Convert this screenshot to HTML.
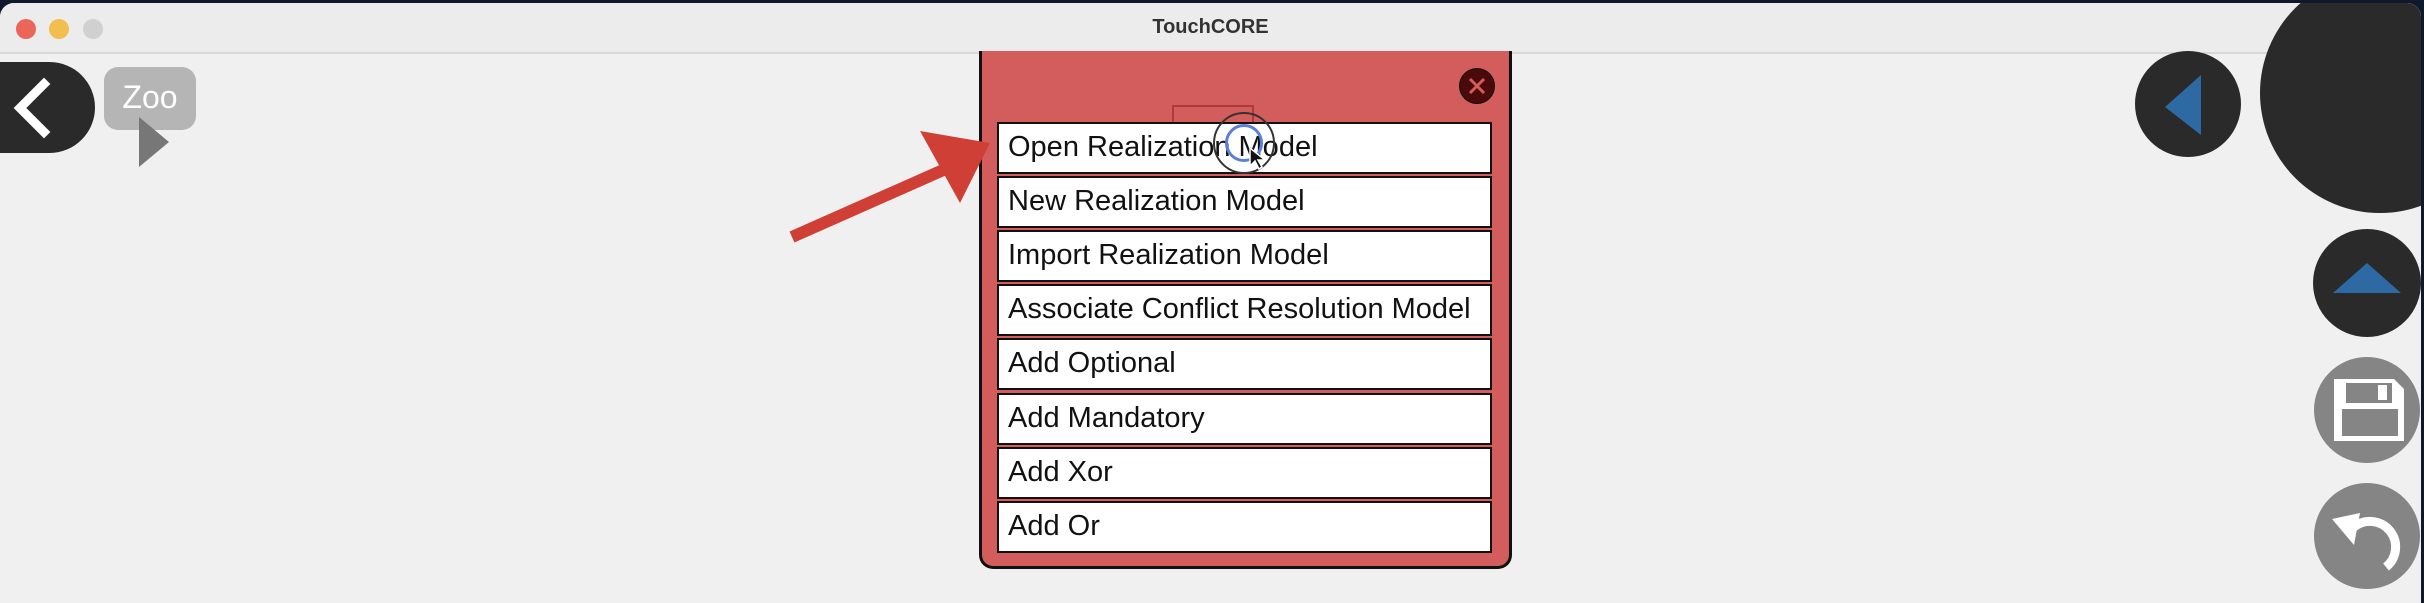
<!DOCTYPE html>
<html><head><meta charset="utf-8"><style>
body{margin:0;width:2424px;height:600px;overflow:hidden;background:#0e1a2c;font-family:"Liberation Sans",sans-serif;position:relative}
.win{position:absolute;left:0;top:3px;width:2421px;height:600px;background:#f0f0f0;border-radius:14px 14px 0 0;overflow:hidden}
.title{position:absolute;left:0;top:0;width:100%;height:49px;background:#ececec;border-bottom:2px solid #d8d8d8;text-align:center;line-height:48px;font-size:20px;font-weight:bold;color:#333}
.dot{position:absolute;top:16px;width:20px;height:20px;border-radius:50%}
.a{position:absolute}
.pop{position:absolute;left:979px;top:48px;width:527px;height:515px;background:#d35d5d;border:3px solid #111;border-top:none;border-radius:0 0 14px 14px}
.item{position:absolute;left:997px;width:482px;height:48px;background:#fff;border:2px solid #111;font-size:29px;line-height:46px;padding-left:9px;box-sizing:content-box;color:#111;white-space:nowrap}
</style></head><body>
<div class="win">
<div class="title">TouchCORE</div>
<div class="dot" style="left:16px;background:#ec6559"></div>
<div class="dot" style="left:49px;background:#f2be4f"></div>
<div class="dot" style="left:83px;background:#d0d0d0"></div>
<div class="a" style="left:-50px;top:59px;width:145px;height:91px;background:#2a2a2a;border-radius:46px"></div>
<svg class="a" style="left:0;top:59px" width="96" height="92"><polyline points="44,22 20,46 44,70" fill="none" stroke="#fff" stroke-width="9" stroke-linecap="square"/></svg>
<div class="a" style="left:104px;top:64px;width:92px;height:63px;background:#b5b5b5;border-radius:14px;color:#fff;font-size:32px;text-align:center;line-height:60px">Zoo</div>
<svg class="a" style="left:139px;top:114px" width="32" height="52"><polygon points="0,0 30,25 0,50" fill="#777"/></svg>
<div class="pop"></div>
<div class="a" style="left:1172px;top:102px;width:78px;height:25px;border:2px solid #b03a3a;border-bottom:none"></div>
<div class="a" style="left:1459px;top:65px;width:34px;height:34px;border-radius:50%;background:#4a0a0a;border:1px solid #111"></div>
<svg class="a" style="left:1459px;top:65px" width="36" height="36"><path d="M11 11L25 25M25 11L11 25" stroke="#d35d5d" stroke-width="3"/></svg>
<div class="item" style="top:119px">Open Realization Model</div>
<div class="item" style="top:173px">New Realization Model</div>
<div class="item" style="top:227px">Import Realization Model</div>
<div class="item" style="top:281px">Associate Conflict Resolution Model</div>
<div class="item" style="top:335px">Add Optional</div>
<div class="item" style="top:390px">Add Mandatory</div>
<div class="item" style="top:444px">Add Xor</div>
<div class="item" style="top:498px">Add Or</div>
<div class="a" style="left:1213px;top:109px;width:62px;height:62px;border-radius:50%;border:2px solid #333;box-sizing:border-box"></div>
<div class="a" style="left:1225px;top:121px;width:38px;height:38px;border-radius:50%;border:3px solid #5a7fd8;box-sizing:border-box"></div>
<svg class="a" style="left:1248px;top:143px" width="20" height="26"><path d="M2 2L2 20L7 15L11 23L14 21L10 14L17 14Z" fill="#111" stroke="#fff" stroke-width="1.5"/></svg>
<svg class="a" style="left:780px;top:120px" width="230" height="130"><line x1="12" y1="114" x2="170" y2="44" stroke="#cf3f36" stroke-width="12"/><polygon points="210,20 140,8 180,80" fill="#cf3f36"/></svg>
<div class="a" style="left:2135px;top:48px;width:106px;height:106px;border-radius:50%;background:#2a2a2a"></div>
<svg class="a" style="left:2135px;top:48px" width="106" height="106"><polygon points="66,24 66,84 30,56" fill="#2d6aa3"/></svg>
<div class="a" style="left:2260px;top:-30px;width:240px;height:240px;border-radius:50%;background:#2a2a2a"></div>
<div class="a" style="left:2313px;top:226px;width:108px;height:108px;border-radius:50%;background:#2a2a2a"></div>
<svg class="a" style="left:2313px;top:226px" width="108" height="108"><polygon points="54,34 88,64 20,64" fill="#2d6aa3"/></svg>
<div class="a" style="left:2314px;top:354px;width:106px;height:106px;border-radius:50%;background:#858585"></div>
<svg class="a" style="left:2314px;top:354px" width="106" height="106"><path d="M20 22H80L90 32V84H20Z" fill="#fff"/><rect x="32" y="26" width="46" height="20" fill="#858585"/><rect x="64" y="28" width="9" height="15" fill="#fff"/><rect x="28" y="52" width="56" height="27" fill="#858585"/></svg>
<div class="a" style="left:2314px;top:480px;width:106px;height:106px;border-radius:50%;background:#858585"></div>
<svg class="a" style="left:2314px;top:480px" width="106" height="106"><path d="M40 44A22 22 0 1 1 72 84" fill="none" stroke="#fff" stroke-width="9"/><polygon points="18,36 46,30 40,62" fill="#fff"/></svg>
</div>
</body></html>
